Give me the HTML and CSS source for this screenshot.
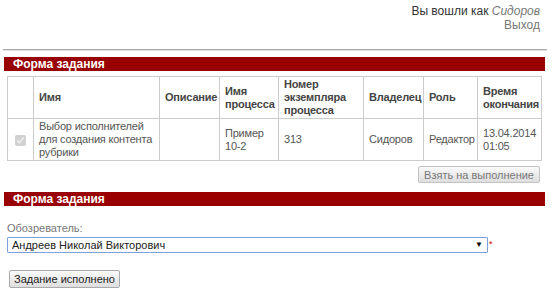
FILE: index.html
```html
<!DOCTYPE html>
<html lang="ru">
<head>
    <meta charset="UTF-8">
    <title>Форма задания</title>
    <link rel="stylesheet" href="styles.css">
</head>
<body>

    <!-- Current user -->
    <div class="user-bar">
        Вы вошли как <em class="user-name">Сидоров</em><br>
        <a class="logout" href="#">Выход</a>
    </div>

    <hr class="divider">

    <!-- Task list -->
    <div class="section-title">Форма задания</div>
    <table class="task-table">
        <colgroup>
            <col class="col-check">
            <col class="col-name">
            <col class="col-desc">
            <col class="col-proc">
            <col class="col-num">
            <col class="col-owner">
            <col class="col-role">
            <col class="col-time">
        </colgroup>
        <tr>
            <th></th>
            <th>Имя</th>
            <th>Описание</th>
            <th>Имя процесса</th>
            <th>Номер экземпляра процесса</th>
            <th>Владелец</th>
            <th>Роль</th>
            <th>Время окончания</th>
        </tr>
        <tr>
            <td class="check-cell"><input type="checkbox" checked disabled></td>
            <td>Выбор исполнителей для создания контента рубрики</td>
            <td></td>
            <td>Пример 10-2</td>
            <td>313</td>
            <td>Сидоров</td>
            <td>Редактор</td>
            <td>13.04.2014 01:05</td>
        </tr>
    </table>
    <div class="actions">
        <button class="btn btn-muted">Взять на выполнение</button>
    </div>

    <!-- Task form -->
    <div class="section-title">Форма задания</div>
    <form class="task-form">
        <label class="field-label" for="reviewer">Обозреватель:</label>
        <div class="field-row">
            <div class="select-wrap">
                <select id="reviewer" class="select">
                    <option>Андреев Николай Викторович</option>
                </select>
                <span class="select-arrow">&#9660;</span>
            </div>
            <span class="required">*</span>
        </div>
        <button type="button" class="btn btn-submit">Задание исполнено</button>
    </form>

</body>
</html>
```

FILE: styles.css
```css
body {
    font-family: 'Liberation Sans', Arial, sans-serif;
    font-size: 11px;
    color: #333;
    background-color: #fff;
    margin: 0;
    padding: 0;
}

.user-bar {
    text-align: right;
    padding: 4px 12px 0 0;
    font-size: 12px;
    line-height: 14px;
    color: #333;
}

.user-name {
    color: #777;
}

.logout {
    color: #777;
    text-decoration: none;
}

.divider {
    margin: 17px 5px 0 3px;
    height: 0;
    border: 0;
    border-top: 1px solid #aaa;
    border-bottom: 1px solid #e2e2e2;
}

.section-title {
    margin: 6px 7px 0 4px;
    height: 14px;
    line-height: 14px;
    padding-left: 9px;
    background-color: #990000;
    color: #fff;
    font-size: 12px;
    font-weight: bold;
}

.task-table {
    margin: 5px 11px 0 7px;
    width: 534px;
    table-layout: fixed;
    border-collapse: collapse;
}

.col-check { width: 26px; }
.col-name { width: 126px; }
.col-desc { width: 60px; }
.col-proc { width: 59px; }
.col-num { width: 85px; }
.col-owner { width: 60px; }
.col-role { width: 54px; }
.col-time { width: 64px; }

.task-table th,
.task-table td {
    border: 1px solid #ccc;
    padding: 1px 3px 1px 5px;
    line-height: 13px;
    letter-spacing: -0.2px;
    text-align: left;
    vertical-align: middle;
}

.task-table th {
    height: 39px;
    color: #444;
    font-weight: bold;
}

.task-table td {
    height: 39px;
    color: #555;
}

.task-table .check-cell {
    text-align: center;
    padding: 0;
}

.check-cell input {
    width: 11px;
    height: 11px;
    margin: 0;
    vertical-align: middle;
}

.actions {
    text-align: right;
    padding-right: 12px;
    margin-top: 5px;
}

.btn {
    font-family: 'Liberation Sans', Arial, sans-serif;
    font-size: 11px;
    height: 18px;
    padding: 0 4px;
    border: 1px solid #aaa;
    border-radius: 2px;
    background: linear-gradient(#fafafa, #dedede);
    color: #222;
    cursor: pointer;
}

.btn-muted {
    height: 17px;
    padding: 0 5px;
    color: #777;
    border-color: #c2c2c2;
}

.actions + .section-title {
    margin-top: 9px;
}

.task-form {
    margin: 0;
    padding: 16px 0 0 7px;
}

.field-label {
    display: block;
    color: #777;
    line-height: 13px;
}

.field-row {
    display: flex;
    align-items: flex-start;
    margin-top: 2px;
}

.select-wrap {
    position: relative;
    width: 481px;
}

.select {
    appearance: none;
    -webkit-appearance: none;
    display: block;
    width: 100%;
    height: 16px;
    margin: 0;
    padding: 0 0 0 4px;
    border: 1px solid #7d9fe0;
    border-radius: 1px;
    background-color: #fff;
    font-family: 'Liberation Sans', Arial, sans-serif;
    font-size: 11px;
    color: #222;
    outline: none;
}

.select-arrow {
    position: absolute;
    right: 5px;
    top: 3px;
    font-size: 8px;
    line-height: 10px;
    color: #000;
}

.required {
    color: #cc0000;
    font-size: 9px;
    line-height: 9px;
    margin: 3px 0 0 1px;
}

.btn-submit {
    margin: 17px 0 0 2px;
}
```
